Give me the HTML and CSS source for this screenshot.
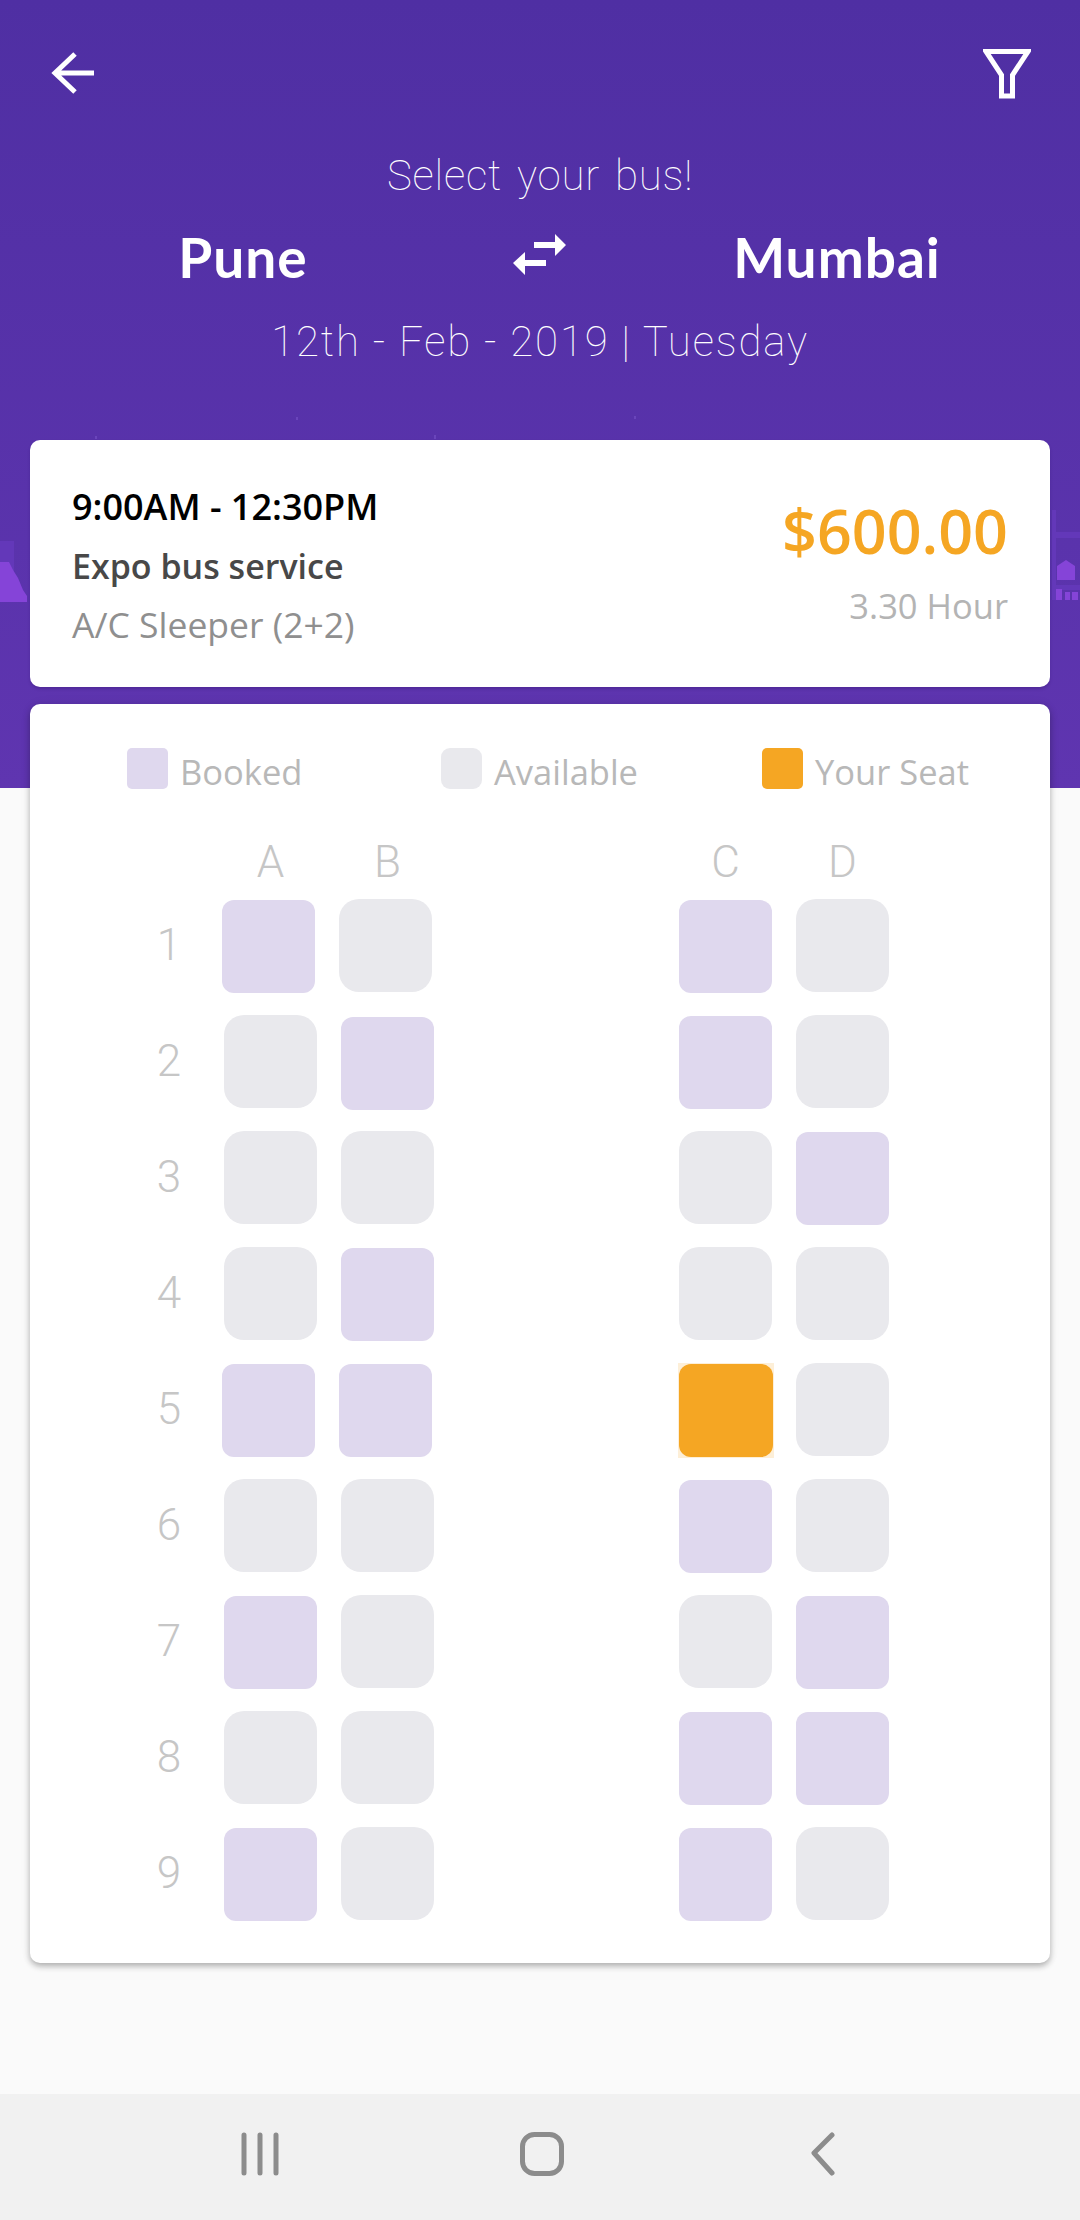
FILE: index.html
```html
<!DOCTYPE html>
<html lang="en">
<head>
<meta charset="utf-8">
<title>Select your bus</title>
<link rel="stylesheet" href="styles.css">
</head>
<body>
<div class="hero">
  <svg class="skyline" width="1080" height="788" viewBox="0 0 1080 788">
    <g class="dots">
      <rect x="296" y="417" width="2" height="3"/><rect x="634" y="416" width="2" height="3"/>
      <rect x="95" y="436" width="2" height="3"/><rect x="434" y="435" width="2" height="4"/>
    </g>
    <path class="city-dim" d="M0 541 H14 V600 H0 Z M1052 510 H1056 V600 H1052 Z M1056 532 H1080 V538 H1056 Z M1056 585 H1080 V590 H1056 Z"/>
    <path class="city" d="M0 562 H9 L13 570 L18 578 L23 590 L27 596 L27 602 H0 Z"/>
    <path class="city" d="M1057 566 L1066 560 L1075 566 V580 H1057 Z M1056 589 H1062 V600 H1056 Z M1065 592 H1070 V600 H1065 Z M1072 592 H1078 V600 H1072 Z"/>
  </svg>
</div>
<main class="page">
  <header class="topbar">
    <svg class="icon-back" width="46" height="44" viewBox="0 0 46 44" aria-label="Back">
      <path d="M43 22 H5 M24 3 L4 22 L24 41" fill="none" stroke="#fff" stroke-width="5"/>
    </svg>
    <svg class="icon-filter" width="48" height="50" viewBox="0 0 48 50" aria-label="Filter">
      <path d="M3 2.5 H45 L29.5 26 V47 H18.5 V26 Z" fill="none" stroke="#fff" stroke-width="5"/>
    </svg>
  </header>
  <h1 class="title">Select your bus!</h1>
  <div class="route">
    <span class="city-name">Pune</span>
    <svg class="icon-swap" width="54" height="42" viewBox="0 0 54 42" aria-label="Swap">
      <path d="M21 8 H42 V0 L53 11 L42 22 V14 H21 Z M33 26 H12 V18 L0 29 L12 41 V32 H33 Z" fill="#fff"/>
    </svg>
    <span class="city-name">Mumbai</span>
  </div>
  <p class="date">12th - Feb - 2019 | Tuesday</p>

  <section class="card trip">
    <div class="trip-info">
      <div class="trip-time">9:00AM - 12:30PM</div>
      <div class="trip-name">Expo bus service</div>
      <div class="trip-type">A/C Sleeper (2+2)</div>
    </div>
    <div class="trip-fare">
      <div class="trip-price">$600.00</div>
      <div class="trip-hours">3.30 Hour</div>
    </div>
  </section>

  <section class="card seats">
    <div class="legend">
      <div class="legend-item legend-booked"><span class="swatch swatch-booked"></span><span class="legend-text">Booked</span></div>
      <div class="legend-item legend-available"><span class="swatch swatch-available"></span><span class="legend-text">Available</span></div>
      <div class="legend-item legend-mine"><span class="swatch swatch-mine"></span><span class="legend-text">Your Seat</span></div>
    </div>
    <div class="seat-grid">
      <span></span><span class="col">A</span><span class="col">B</span><span></span><span class="col">C</span><span class="col">D</span>

      <span class="row">1</span><span class="seat booked left"></span><span class="seat free left"></span><span></span><span class="seat booked"></span><span class="seat free"></span>
      <span class="row">2</span><span class="seat free"></span><span class="seat booked low"></span><span></span><span class="seat booked"></span><span class="seat free"></span>
      <span class="row">3</span><span class="seat free"></span><span class="seat free"></span><span></span><span class="seat free"></span><span class="seat booked"></span>
      <span class="row">4</span><span class="seat free"></span><span class="seat booked"></span><span></span><span class="seat free"></span><span class="seat free"></span>
      <span class="row">5</span><span class="seat booked left"></span><span class="seat booked left"></span><span></span><span class="seat mine"></span><span class="seat free"></span>
      <span class="row">6</span><span class="seat free"></span><span class="seat free"></span><span></span><span class="seat booked"></span><span class="seat free"></span>
      <span class="row">7</span><span class="seat booked"></span><span class="seat free"></span><span></span><span class="seat free"></span><span class="seat booked"></span>
      <span class="row">8</span><span class="seat free"></span><span class="seat free"></span><span></span><span class="seat booked"></span><span class="seat booked"></span>
      <span class="row">9</span><span class="seat booked"></span><span class="seat free"></span><span></span><span class="seat booked"></span><span class="seat free"></span>
    </div>
  </section>

  <nav class="navbar">
    <svg width="640" height="44" viewBox="0 0 640 44" aria-label="Navigation">
      <path class="nav-thin" d="M24 3 V41 M40 3 V41 M56 3 V41"/>
      <rect class="nav-thin" x="302.5" y="2.5" width="39" height="39" rx="12"/>
      <path class="nav-thin" d="M612 4 L594 22 L612 42" transform="translate(0 -1)"/>
    </svg>
  </nav>
</main>
</body>
</html>
```
FILE: styles.css
```css
* { box-sizing: border-box; }
html, body { margin: 0; padding: 0; }
body {
  width: 1080px;
  height: 2220px;
  overflow: hidden;
  background: #fafafa;
  font-family: "Open Sans", "Noto Sans", sans-serif;
  position: relative;
}
.hero {
  position: absolute;
  left: 0; top: 0;
  width: 1080px;
  height: 788px;
  background: linear-gradient(180deg, #4f2fa3 0%, #5f35b0 100%);
}
.skyline { display: block; }
.dots rect { fill: #6a45bb; }
.city { fill: #8544d8; }
.city-dim { fill: #6338b9; }

.page {
  position: relative;
  height: 2220px;
  display: flex;
  flex-direction: column;
}
.topbar {
  display: flex;
  justify-content: space-between;
  align-items: flex-start;
  padding: 49px 49px 0 51px;
  height: 148px;
}
.icon-back { margin-top: 2px; }
.icon-filter { margin-left: 1px; }
.title {
  margin: 0;
  text-align: center;
  color: #fff;
  font-family: Roboto, sans-serif;
  font-weight: 100;
  font-size: 42px;
  line-height: 56px;
  letter-spacing: .8px;
  word-spacing: 4px;
}
.route {
  display: grid;
  grid-template-columns: 486px 108px 486px;
  align-items: center;
  justify-items: center;
  margin-top: 23px;
  height: 60px;
}
.city-name {
  color: #fff;
  font-family: Lato, sans-serif;
  font-weight: 700;
  font-size: 55px;
  line-height: 60px;
  letter-spacing: 1px;
}
.icon-swap { display: block; margin-top: -4px; }
.date {
  margin: 27px 0 0;
  text-align: center;
  color: #fff;
  font-family: Roboto, sans-serif;
  font-weight: 100;
  font-size: 42px;
  line-height: 56px;
  letter-spacing: 1.85px;
}
.card {
  margin: 0 30px;
  background: #fff;
  border-radius: 10px;
}
.trip {
  position: absolute;
  top: 440px;
  left: 0;
  width: 1020px;
  height: 247px;
  display: flex;
  justify-content: space-between;
  padding: 0 42px;
  box-shadow: 0 2px 3px rgba(40, 10, 90, .25);
}
.trip-info { padding-top: 38px; }
.trip-time {
  color: #000;
  font-weight: 600;
  font-size: 36px;
  line-height: 58.5px;
}
.trip-name {
  color: #484848;
  font-weight: 600;
  font-size: 34px;
  line-height: 58.5px;
}
.trip-type {
  color: #8f8f8f;
  font-size: 35.5px;
  line-height: 58.5px;
}
.trip-fare { text-align: right; padding-top: 45px; }
.trip-price {
  color: #f5a623;
  font-weight: 600;
  font-size: 61px;
  line-height: 92px;
}
.trip-hours {
  color: #b4b4b4;
  font-size: 34.5px;
  line-height: 58px;
}
.seats {
  position: absolute;
  top: 704px;
  left: 0;
  width: 1020px;
  height: 1259px;
  padding-top: 44px;
  box-shadow: 0 3px 6px rgba(0, 0, 0, .3), 0 0 14px rgba(0, 0, 0, .04);
}
.legend {
  position: relative;
  height: 42px;
}
.legend-item {
  position: absolute;
  top: 0;
  display: flex;
  align-items: flex-start;
  gap: 12px;
  color: #b8b8b8;
  font-size: 34.5px;
  line-height: 42px;
  height: 42px;
  white-space: nowrap;
}
.legend-text { margin-top: 3px; }
.legend-booked { left: 97px; }
.legend-available { left: 411px; }
.legend-mine { left: 732px; }
.swatch { width: 41px; height: 41px; border-radius: 5px; display: block; }
.swatch-available { border-radius: 9px; background: #e9e9ed; }
.swatch-booked { background: #dfd8ee; }
.swatch-mine { background: #f5a623; }

.seat-grid {
  display: grid;
  grid-template-columns: 85px 93px 93px 197px 93px 93px;
  grid-template-rows: 86px;
  grid-auto-rows: 93px;
  column-gap: 24px;
  row-gap: 23px;
  padding-left: 85px;
}
.col, .row {
  font-family: Roboto, sans-serif;
  font-weight: 300;
  color: #c6c6c6;
  font-size: 44px;
  text-align: center;
}
.col { line-height: 1; align-self: end; margin-bottom: -8px; }
.row { line-height: 93px; padding-left: 23px; }
.seat { width: 93px; height: 93px; display: block; }
.free { background: #e9e9ed; border-radius: 20px; }
.booked { background: #dfd8ee; border-radius: 12px; margin-top: 1px; }
.low { margin-top: 2px; }
.left { margin-left: -2px; }
.mine {
  position: relative;
  background: #fdefd8;
  width: 96px;
  height: 95px;
  margin-left: -1px;
}
.mine::after {
  content: "";
  position: absolute;
  inset: 1px;
  background: #f5a623;
  border-radius: 12px;
}
.navbar {
  margin-top: auto;
  height: 126px;
  background: #f1f1f1;
  padding: 38px 0 0 220px;
}
.navbar svg { display: block; }
.nav-thin {
  fill: none;
  stroke: #8c8c8c;
  stroke-width: 5;
  stroke-linecap: round;
  stroke-linejoin: round;
}
```
